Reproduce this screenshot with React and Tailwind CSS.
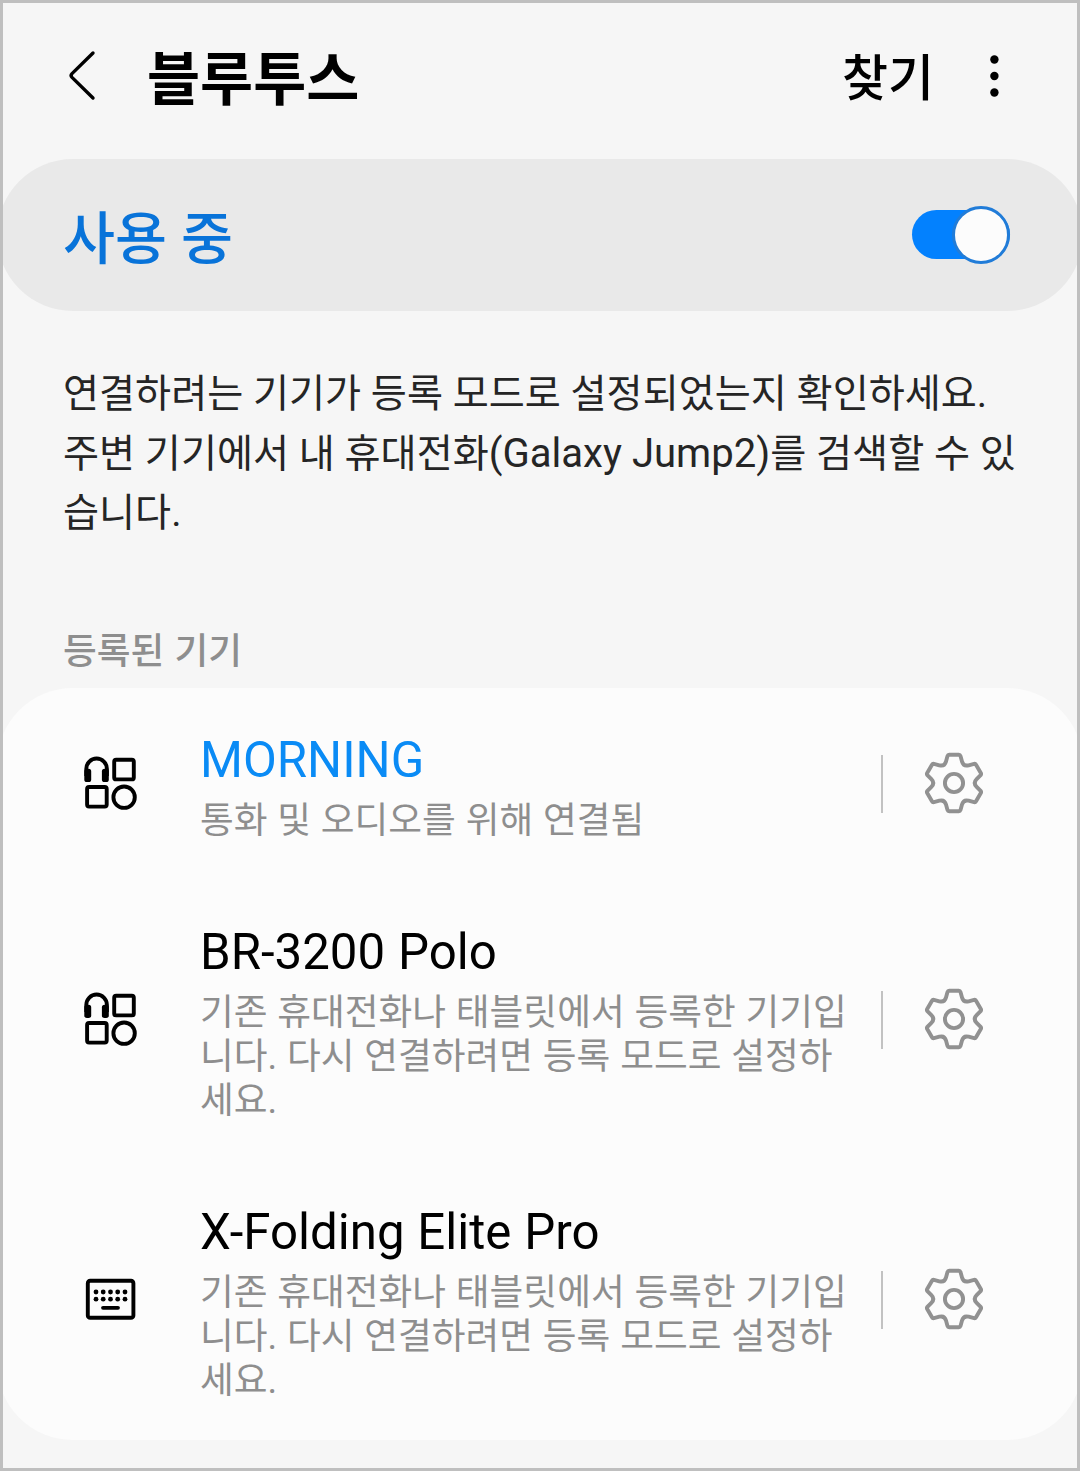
import React, { useState } from 'react';

const devices = [
    {
        name: 'MORNING',
        icon: 'multi',
        connected: true,
        status: ['통화 및 오디오를 위해 연결됨'],
    },
    {
        name: 'BR-3200 Polo',
        icon: 'multi',
        connected: false,
        status: ['기존 휴대전화나 태블릿에서 등록한 기기입', '니다. 다시 연결하려면 등록 모드로 설정하', '세요.'],
    },
    {
        name: 'X-Folding Elite Pro',
        icon: 'keyboard',
        connected: false,
        status: ['기존 휴대전화나 태블릿에서 등록한 기기입', '니다. 다시 연결하려면 등록 모드로 설정하', '세요.'],
    },
];

// Six identical teeth, each one turned by 60 degrees
const buildGearPath = () => {
    const point = (x, y, k) => {
        const a = (k * Math.PI) / 3;
        const px = x * Math.cos(a) - y * Math.sin(a);
        const py = x * Math.sin(a) + y * Math.cos(a);
        return `${px.toFixed(2)} ${py.toFixed(2)}`;
    };
    let d = `M${point(-8, -21.5, 0)}`;
    for (let k = 0; k < 6; k++) {
        d += `L${point(-6.5, -27, k)}Q${point(-6.1, -28.2, k)} ${point(-4.8, -28.2, k)}`;
        d += `L${point(4.8, -28.2, k)}Q${point(6.1, -28.2, k)} ${point(6.5, -27, k)}`;
        d += `L${point(8, -21.5, k)}Q${point(9.4, -16.3, k)} ${point(-8, -21.5, k + 1)}`;
    }
    return d + 'Z';
};

const gearPath = buildGearPath();

const GearIcon = () => (
    <svg width="62" height="62" viewBox="-31 -31 62 62" fill="none" stroke="#919191" strokeWidth="3.9" strokeLinejoin="round">
        <path d={gearPath} />
        <circle r="9.1" />
    </svg>
);

const MultiDeviceIcon = () => (
    <svg width="54" height="54" viewBox="0 0 54 54" fill="none" stroke="#000" strokeWidth="3.9">
        <path d="M2.3 20V12.8a10.3 10.3 0 0 1 20.6 0V20" />
        <rect x="0.3" y="12.8" width="6.9" height="13.2" rx="2.6" fill="#000" stroke="none" />
        <rect x="17.9" y="12.8" width="6.9" height="13.2" rx="2.6" fill="#000" stroke="none" />
        <rect x="30.2" y="3.8" width="19.6" height="19.6" rx="2" />
        <rect x="3.1" y="31" width="19.6" height="19.6" rx="2" />
        <circle cx="40.1" cy="41.2" r="10.7" />
    </svg>
);

const KeyboardIcon = () => (
    <svg width="54" height="54" viewBox="0 0 54 54" fill="none" stroke="#000">
        <rect x="3.8" y="8.8" width="45.6" height="37" rx="2.4" strokeWidth="3.9" />
        {[12, 19.2, 26.5, 33.7, 41].map((x) => (
            <g key={x} fill="#000" stroke="none">
                <circle cx={x} cy="20" r="2.4" />
                <circle cx={x} cy="27.2" r="2.4" />
            </g>
        ))}
        <path d="M19 35.8h15" strokeWidth="3.8" strokeLinecap="round" />
    </svg>
);

const DeviceRow = ({ device }) => (
    <li className={`flex items-center pl-[87px] ${device.connected ? 'h-[192px]' : 'h-[280px]'}`}>
        <div className="mb-[2px]">{device.icon === 'keyboard' ? <KeyboardIcon /> : <MultiDeviceIcon />}</div>
        <div className="ml-[62px] w-[681px] pt-[5px] whitespace-nowrap">
            <div className={`text-[49.2px] leading-[58px] [word-spacing:0.6px] ${device.connected ? 'text-[#0a8bf5]' : 'text-black'}`}>{device.name}</div>
            <div className="mt-[10px] text-[36.7px] leading-[44px] [word-spacing:0.7px] text-[#8e8e8e]">
                {device.status.map((line) => (
                    <div key={line}>{line}</div>
                ))}
            </div>
        </div>
        <div className="h-[58px] w-[2px] bg-[#c2c2c2]" />
        <button type="button" className="mb-[2px] ml-[40px]" aria-label="설정">
            <GearIcon />
        </button>
    </li>
);

const App = () => {
    const [enabled, setEnabled] = useState(true);

    return (
        <div className="h-[1471px] w-[1080px] overflow-hidden border-[3px] border-[#bfbfbf] bg-[#f6f6f6] font-[Roboto,'Noto_Sans_CJK_KR',sans-serif]">
            <header className="flex h-[156px] items-center pb-[10px] pl-[64px]">
                <button type="button" aria-label="뒤로">
                    <svg width="30" height="52" viewBox="0 0 30 52" fill="none" stroke="#000" strokeWidth="3.4" strokeLinecap="round" strokeLinejoin="round">
                        <path d="M26 3 5 23.6Q3.2 25.5 5 27.4L26 48" />
                    </svg>
                </button>
                <h1 className="ml-[50px] pt-[7px] whitespace-nowrap text-[57.7px] leading-[80px] font-bold text-black">블루투스</h1>
                <button type="button" className="ml-auto pt-[5px] whitespace-nowrap text-[50px] leading-[70px] font-medium text-black">찾기</button>
                <button type="button" className="mr-[77px] ml-[54px]" aria-label="더보기">
                    <svg width="12" height="44" viewBox="0 0 12 44">
                        <circle cx="6.4" cy="5.5" r="4.2" />
                        <circle cx="6.4" cy="22" r="4.2" />
                        <circle cx="6.4" cy="38.5" r="4.2" />
                    </svg>
                </button>
            </header>

            <section className="-mx-[6px] flex h-[152px] items-center justify-between rounded-full bg-[#e9e9e9] pr-[73px] pl-[66px]">
                <span className="pt-[10px] text-[56.5px] leading-[80px] font-medium text-[#0873d9]">사용 중</span>
                <button
                    type="button"
                    role="switch"
                    aria-checked={enabled}
                    aria-label="블루투스"
                    onClick={() => setEnabled(!enabled)}
                    className={`mb-[1px] flex h-[49px] w-[98px] items-center rounded-full ${enabled ? 'justify-end bg-[#0381fe]' : 'bg-gray-400'}`}
                >
                    <span className="mt-[1px] h-[58px] w-[58px] shrink-0 rounded-full border-[3px] border-[#217cd8] bg-[#fcfcfc]" />
                </button>
            </section>

            <p className="mt-[54px] ml-[60px] whitespace-nowrap text-[39.2px] leading-[59px] text-[#252525]">
                <span className="block">연결하려는 기기가 등록 모드로 설정되었는지 확인하세요.</span>
                <span className="block">
                    주변 기기에서 내 휴대전화<span className="text-[40.1px]">(Galaxy Jump2)</span>를 검색할 수 있
                </span>
                <span className="block">습니다.</span>
            </p>

            <h2 className="mt-[84px] ml-[60px] text-[36.7px] leading-[50px] font-medium [word-spacing:1px] text-[#8e8e8e]">등록된 기기</h2>

            <ul className="-mx-[6px] mt-[11px] rounded-[76px] bg-[#fcfcfc]">
                {devices.map((device) => (
                    <DeviceRow key={device.name} device={device} />
                ))}
            </ul>
        </div>
    );
};

export default App;
